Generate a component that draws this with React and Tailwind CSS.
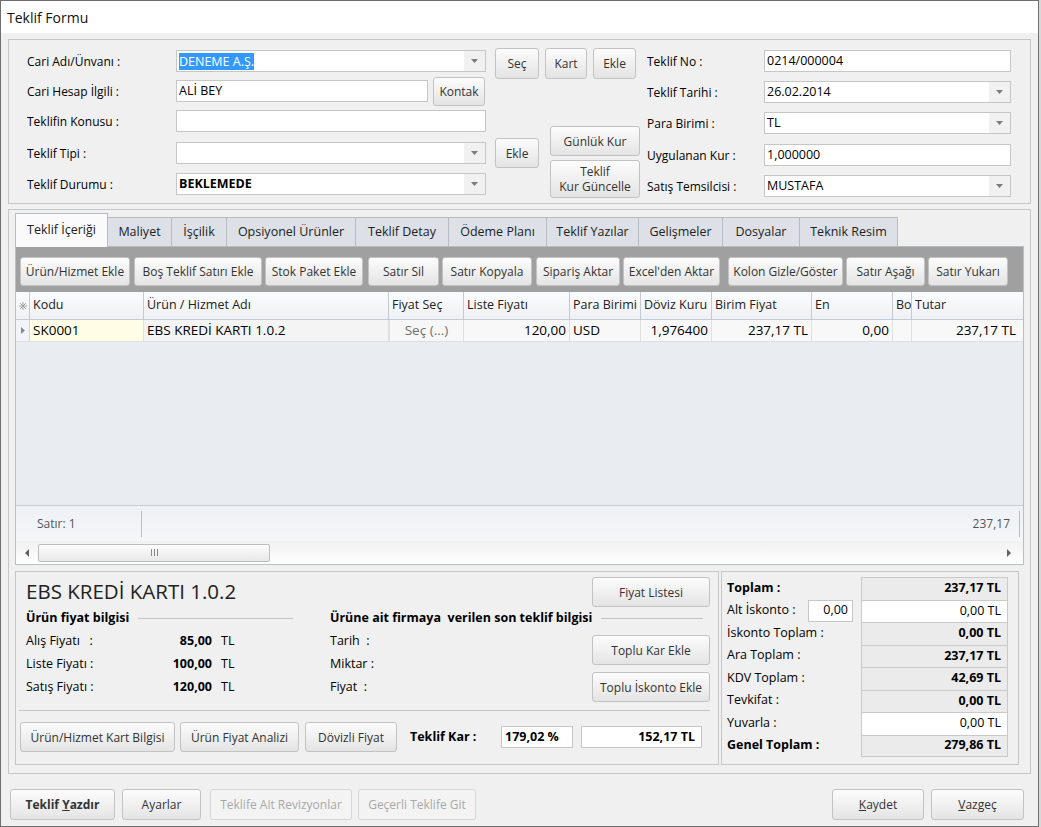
import React from "react";

function Caret() {
  return (
    <svg width="7" height="4" viewBox="0 0 7 4">
      <path d="M0 0h7L3.5 4z" fill="#7c7c7c" />
    </svg>
  );
}

function Btn({ children, className = "", disabled = false, bold = false }) {
  return (
    <button
      type="button"
      className={`flex shrink-0 items-center justify-center rounded-[3px] border text-[12px] leading-[15px] ${
        disabled
          ? "border-[#d6d6d6] bg-[#f3f3f3] text-[#a9a9a9]"
          : "border-[#c2c2c2] bg-linear-to-b from-[#fcfcfc] to-[#e4e4e4] text-[#333]"
      } ${bold ? "font-bold" : ""} ${className}`}
    >
      {children}
    </button>
  );
}

function Field({ className = "", value = "", combo = false, bold = false, selected = false }) {
  return (
    <div className={`flex h-[22px] shrink-0 items-stretch border border-[#c6c6c6] bg-white ${className}`}>
      <div
        className={`flex flex-1 items-center overflow-hidden whitespace-nowrap pl-[2px] text-[12.5px] text-black ${
          bold ? "font-bold" : ""
        }`}
      >
        {selected ? <span className="bg-[#3399ff] leading-[17px] text-white">{value}</span> : value}
      </div>
      {combo && (
        <div className="flex w-[21px] items-center justify-center bg-[#f1f1f1]">
          <Caret />
        </div>
      )}
    </div>
  );
}

function Label({ children, className = "" }) {
  return (
    <div className={`shrink-0 whitespace-nowrap pt-px text-[12px] leading-[22px] text-black ${className}`}>
      {children}
    </div>
  );
}

const tabs = [
  ["Teklif İçeriği", "w-[93px]"],
  ["Maliyet", "w-[64px]"],
  ["İşçilik", "w-[55px]"],
  ["Opsiyonel Ürünler", "w-[129px]"],
  ["Teklif Detay", "w-[93px]"],
  ["Ödeme Planı", "w-[98px]"],
  ["Teklif Yazılar", "w-[92px]"],
  ["Gelişmeler", "w-[84px]"],
  ["Dosyalar", "w-[77px]"],
  ["Teknik Resim", "w-[98px]"],
];

const toolbar = [
  ["Ürün/Hizmet Ekle", "ml-[4px] w-[110px]"],
  ["Boş Teklif Satırı Ekle", "ml-[4px] w-[128px]"],
  ["Stok Paket Ekle", "ml-[3px] w-[98px]"],
  ["Satır Sil", "ml-[5px] w-[71px]"],
  ["Satır Kopyala", "ml-[3px] w-[90px]"],
  ["Sipariş Aktar", "ml-[4px] w-[84px]"],
  ["Excel'den Aktar", "ml-[3px] w-[97px]"],
  ["Kolon Gizle/Göster", "ml-[8px] w-[115px]"],
  ["Satır Aşağı", "ml-[3px] w-[79px]"],
  ["Satır Yukarı", "ml-[3px] w-[80px]"],
];

const columns = [
  { title: "Kodu", w: "w-[114px]" },
  { title: "Ürün / Hizmet Adı", w: "w-[245px]" },
  { title: "Fiyat Seç", w: "w-[75px]" },
  { title: "Liste Fiyatı", w: "w-[106px]" },
  { title: "Para Birimi", w: "w-[71px]" },
  { title: "Döviz Kuru", w: "w-[71px]" },
  { title: "Birim Fiyat", w: "w-[100px]" },
  { title: "En", w: "w-[81px]" },
  { title: "Bo", w: "w-[19px]" },
  { title: "Tutar", w: "w-[107px]" },
];

const totals = [
  { label: "Toplam :", value: "237,17 TL", boldLabel: true },
  { label: "Alt İskonto :", value: "0,00 TL", white: true, input: "0,00" },
  { label: "İskonto Toplam :", value: "0,00 TL" },
  { label: "Ara Toplam :", value: "237,17 TL" },
  { label: "KDV Toplam :", value: "42,69 TL" },
  { label: "Tevkifat :", value: "0,00 TL" },
  { label: "Yuvarla :", value: "0,00 TL", white: true },
  { label: "Genel Toplam :", value: "279,86 TL", boldLabel: true },
];

function Star() {
  return (
    <svg width="8" height="8" viewBox="0 0 8 8" stroke="#a3a3a3" strokeWidth="1">
      <path d="M4 0v8M0 4h8M1.2 1.2l5.6 5.6M6.8 1.2L1.2 6.8" />
    </svg>
  );
}

function TopForm() {
  return (
    <div className="mx-[7px] mt-[6px] flex h-[165px] border border-[#c6c6c6] pl-[18px] pt-[10px]">
      <div className="flex w-[613px] flex-col">
        <div className="flex h-[22px] items-start">
          <Label className="w-[149px]">Cari Adı/Ünvanı :</Label>
          <Field className="w-[310px]" value="DENEME A.Ş." combo selected />
          <Btn className="-mt-[2px] ml-[9px] h-[31px] w-[44px]">Seç</Btn>
          <Btn className="-mt-[2px] ml-[6px] h-[31px] w-[42px]">Kart</Btn>
          <Btn className="-mt-[2px] ml-[6px] h-[31px] w-[43px]">Ekle</Btn>
        </div>
        <div className="mt-[8px] flex">
          <div className="flex w-[513px] flex-col">
            <div className="flex h-[22px] items-start">
              <Label className="w-[149px]">Cari Hesap İlgili :</Label>
              <Field className="w-[252px]" value="ALİ BEY" />
              <Btn className="-mt-[3px] ml-[5px] h-[29px] w-[52px]">Kontak</Btn>
            </div>
            <div className="mt-[8px] flex h-[22px] items-start">
              <Label className="w-[149px]">Teklifin Konusu :</Label>
              <Field className="w-[310px]" />
            </div>
            <div className="mt-[10px] flex h-[22px] items-start">
              <Label className="w-[149px]">Teklif Tipi :</Label>
              <Field className="w-[310px]" combo />
              <Btn className="-mt-[4px] ml-[9px] h-[30px] w-[44px]">Ekle</Btn>
            </div>
            <div className="mt-[9px] flex h-[22px] items-start">
              <Label className="w-[149px]">Teklif Durumu :</Label>
              <Field className="w-[310px]" value="BEKLEMEDE" combo bold />
            </div>
          </div>
          <div className="ml-[10px] flex w-[90px] flex-col">
            <Btn className="mt-[46px] h-[30px] w-[90px]">Günlük Kur</Btn>
            <Btn className="mt-[4px] h-[38px] w-[90px] flex-col">
              <span>Teklif</span>
              <span>Kur Güncelle</span>
            </Btn>
          </div>
        </div>
      </div>
      <div className="ml-[7px] flex flex-col">
        <div className="flex">
          <Label className="w-[117px]">Teklif No :</Label>
          <Field className="w-[247px]" value="0214/000004" />
        </div>
        <div className="mt-[8px] flex">
          <Label className="w-[117px]">Teklif Tarihi :</Label>
          <Field className="w-[247px]" value="26.02.2014" combo />
        </div>
        <div className="mt-[8px] flex">
          <Label className="w-[117px]">Para Birimi :</Label>
          <Field className="w-[247px]" value="TL" combo />
        </div>
        <div className="mt-[9px] flex">
          <Label className="w-[117px]">Uygulanan Kur :</Label>
          <Field className="w-[247px]" value="1,000000" />
        </div>
        <div className="mt-[8px] flex">
          <Label className="w-[117px]">Satış Temsilcisi :</Label>
          <Field className="w-[247px]" value="MUSTAFA" combo />
        </div>
      </div>
    </div>
  );
}

function Grid() {
  const row = [
    { v: "SK0001", cls: "bg-[#fffde6]" },
    { v: "EBS KREDİ KARTI 1.0.2", cls: "bg-[#f4f4f4]" },
    { v: "Seç (...)", cls: "justify-center text-[#6f6f6f] bg-[#f7f7f7] border-x border-[#d4d4d4]" },
    { v: "120,00", cls: "justify-end" },
    { v: "USD", cls: "" },
    { v: "1,976400", cls: "justify-end" },
    { v: "237,17 TL", cls: "justify-end" },
    { v: "0,00", cls: "justify-end" },
    { v: "", cls: "" },
    { v: "237,17 TL", cls: "justify-end" },
  ];
  return (
    <div className="flex h-[318px] flex-col border-x border-b border-[#b9bec6]">
      <div className="flex h-[45px] shrink-0 items-start bg-[#a0a0a0] pt-[10px]">
        {toolbar.map(([label, cls]) => (
          <Btn key={label} className={`h-[29px] text-[12.5px] ${cls}`}>
            {label}
          </Btn>
        ))}
      </div>
      <div className="flex h-[28px] shrink-0 border-b border-[#c5cad1] bg-linear-to-b from-[#fbfcfd] to-[#eef1f5] text-[12.5px] text-[#222]">
        <div className="flex w-[14px] items-center justify-center border-r border-[#c5cad1]">
          <Star />
        </div>
        {columns.map((c, i) => (
          <div
            key={c.title}
            className={`flex items-center overflow-hidden whitespace-nowrap pl-[3px] ${c.w} ${
              i < columns.length - 1 ? "border-r border-[#c5cad1]" : ""
            }`}
          >
            {c.title}
          </div>
        ))}
      </div>
      <div className="flex h-[22px] shrink-0 border-b border-[#dcdfe3] bg-[#f8f8f8] text-[13.5px] text-black">
        <div className="flex w-[14px] items-center justify-center border-r border-[#d0d4da] bg-[#f2f4f7]">
          <svg width="4" height="7" viewBox="0 0 4 7">
            <path d="M0 0l4 3.5L0 7z" fill="#8a8a8a" />
          </svg>
        </div>
        {row.map((c, i) => (
          <div
            key={i}
            className={`flex items-center overflow-hidden whitespace-nowrap px-[3px] ${columns[i].w} ${c.cls} ${
              i < row.length - 1 ? "border-r border-[#e0e0e0]" : ""
            }`}
          >
            {c.v}
          </div>
        ))}
      </div>
      <div className="flex-1 bg-[#e9ecf1]" />
      <div className="flex h-[36px] shrink-0 items-center border-t border-[#c9ced6] bg-linear-to-b from-[#eef1f5] to-[#f4f6f9] text-[12px] text-[#555]">
        <div className="flex h-[26px] w-[126px] items-center border-r border-[#b9bec6] pl-[21px]">Satır: 1</div>
        <div className="flex h-[26px] flex-1 items-center justify-end border-r border-[#b9bec6] pr-[9px]">237,17</div>
        <div className="w-[3px]" />
      </div>
      <div className="flex h-[23px] shrink-0 items-center bg-linear-to-b from-[#f1f1f1] to-white">
        <div className="flex w-[22px] justify-center">
          <svg width="4" height="8" viewBox="0 0 4 8">
            <path d="M4 0v8L0 4z" fill="#606060" />
          </svg>
        </div>
        <div className="flex h-[18px] w-[232px] items-center justify-center gap-[2px] rounded-[2px] border border-[#bdbdbd] bg-linear-to-b from-[#fdfdfd] to-[#e8e8e8]">
          <div className="h-[7px] w-px bg-[#888]" />
          <div className="h-[7px] w-px bg-[#888]" />
          <div className="h-[7px] w-px bg-[#888]" />
        </div>
        <div className="flex-1" />
        <div className="flex w-[16px] justify-start">
          <svg width="4" height="8" viewBox="0 0 4 8">
            <path d="M0 0v8L4 4z" fill="#606060" />
          </svg>
        </div>
      </div>
    </div>
  );
}

function ProductPanel() {
  const prices = [
    ["Alış Fiyatı   :", "85,00"],
    ["Liste Fiyatı :", "100,00"],
    ["Satış Fiyatı :", "120,00"],
  ];
  return (
    <div className="flex h-[194px] w-[704px] flex-col border border-[#c6c6c6] pl-[10px] pr-[8px] text-[12.5px] text-black">
      <div className="mt-[5px] flex items-start justify-between">
        <div className="mt-[1px] text-[20.5px] leading-[26px] text-[#222]">EBS KREDİ KARTI 1.0.2</div>
        <Btn className="h-[30px] w-[118px]">Fiyat Listesi</Btn>
      </div>
      <div className="mt-[2px] flex">
        <div className="flex w-[267px] flex-col">
          <div className="flex h-[18px] items-center">
            <span className="whitespace-nowrap font-bold">Ürün fiyat bilgisi</span>
            <div className="ml-[9px] h-px flex-1 bg-[#c3c3c3]" />
          </div>
          <div className="mt-[3px] flex flex-col">
            {prices.map(([l, v]) => (
              <div key={l} className="flex h-[23px] items-center">
                <div className="flex w-[186px] justify-between whitespace-pre">
                  <span>{l}</span>
                  <span className="font-bold">{v}</span>
                </div>
                <span className="ml-[9px]">TL</span>
              </div>
            ))}
          </div>
        </div>
        <div className="ml-[37px] flex flex-1 flex-col">
          <div className="flex h-[18px] items-center pr-[7px]">
            <span className="whitespace-pre font-bold">Ürüne ait firmaya  verilen son teklif bilgisi</span>
            <div className="ml-[9px] h-px flex-1 bg-[#c3c3c3]" />
          </div>
          <div className="flex items-start">
            <div className="mt-[3px] flex flex-col whitespace-pre">
              <div className="flex h-[23px] items-center">Tarih  :</div>
              <div className="flex h-[23px] items-center">Miktar :</div>
              <div className="flex h-[23px] items-center">Fiyat  :</div>
            </div>
            <div className="ml-auto mt-[8px] flex flex-col">
              <Btn className="h-[30px] w-[118px]">Toplu Kar Ekle</Btn>
              <Btn className="mt-[7px] h-[30px] w-[118px]">Toplu İskonto Ekle</Btn>
            </div>
          </div>
        </div>
      </div>
      <div className="-ml-[7px] mt-[8px] h-px bg-[#c3c3c3]" />
      <div className="mt-[11px] flex items-center">
        <Btn className="-ml-[6px] h-[30px] w-[155px]">Ürün/Hizmet Kart Bilgisi</Btn>
        <Btn className="ml-[5px] h-[30px] w-[119px]">Ürün Fiyat Analizi</Btn>
        <Btn className="ml-[6px] h-[30px] w-[92px]">Dövizli Fiyat</Btn>
        <span className="ml-[13px] w-[91px] whitespace-nowrap font-bold">Teklif Kar :</span>
        <div className="flex h-[22px] w-[72px] items-center border border-[#c6c6c6] bg-white pl-[3px] font-bold">
          179,02 %
        </div>
        <div className="ml-[8px] flex h-[22px] w-[121px] items-center justify-end border border-[#c6c6c6] bg-white pr-[6px] font-bold">
          152,17 TL
        </div>
      </div>
    </div>
  );
}

function TotalsPanel() {
  return (
    <div className="ml-[2px] flex h-[194px] w-[298px] flex-col border border-[#c6c6c6] pl-[5px] pr-[10px] pt-[5px] text-[12.5px] text-black">
      {totals.map((t, i) => (
        <div key={t.label} className="flex h-[22.5px] items-stretch">
          <div className={`flex flex-1 items-center whitespace-nowrap ${t.boldLabel ? "font-bold" : ""}`}>
            {t.label}
            {t.input && (
              <div className="ml-auto mr-[8px] flex h-[22px] w-[45px] items-center justify-end border border-[#c6c6c6] bg-white pr-[4px]">
                {t.input}
              </div>
            )}
          </div>
          <div
            className={`flex w-[147px] items-center justify-end border-x border-t border-[#c9c9c9] pr-[6px] ${
              i === totals.length - 1 ? "border-b" : ""
            } ${t.white ? "bg-white" : "bg-[#ebebeb] font-bold"}`}
          >
            {t.value}
          </div>
        </div>
      ))}
    </div>
  );
}

export default function App() {
  return (
    <div className="flex h-[827px] w-full bg-[#d8d8d8] font-['Open_Sans','Noto_Sans',sans-serif]">
      <div className="flex h-[827px] w-[1039px] shrink-0 flex-col border border-[#6f6f6f] bg-[#f0f0f0]">
        <div className="flex h-[32px] shrink-0 items-center bg-white pl-[6px] text-[14px] text-[#111]">Teklif Formu</div>
        <TopForm />
        <div className="mx-[7px] mt-[5px] flex h-[565px] flex-col border border-[#c6c6c6] px-[6px] pt-[3px]">
          <div className="flex h-[33px] shrink-0 items-end">
            {tabs.map(([label, w], i) => (
              <div
                key={label}
                className={`flex items-center justify-center whitespace-nowrap border-r border-t border-[#b6bbc3] text-[12.5px] text-[#222] ${w} ${
                  i === 0
                    ? "relative z-10 -mb-px h-[34px] border-l bg-[#fafafa]"
                    : "h-[29px] bg-[#dde1e7]"
                }`}
              >
                {label}
              </div>
            ))}
          </div>
          <div className="flex flex-col border-t border-[#b6bbc3]">
            <Grid />
            <div className="mt-[6px] flex">
              <ProductPanel />
              <TotalsPanel />
            </div>
          </div>
        </div>
        <div className="mt-[15px] flex pl-[9px] pr-[14px]">
          <Btn bold className="h-[31px] w-[105px] text-[12.5px]">
            Teklif&nbsp;<span className="underline">Y</span>azdır
          </Btn>
          <Btn className="ml-[7px] h-[31px] w-[79px]">Ayarlar</Btn>
          <Btn disabled className="ml-[9px] h-[31px] w-[142px]">Teklife Ait Revizyonlar</Btn>
          <Btn disabled className="ml-[6px] h-[31px] w-[118px]">Geçerli Teklife Git</Btn>
          <div className="flex-1" />
          <Btn className="h-[31px] w-[92px]">
            <span className="underline">K</span>aydet
          </Btn>
          <Btn className="ml-[7px] h-[31px] w-[93px]">
            <span className="underline">V</span>azgeç
          </Btn>
        </div>
      </div>
    </div>
  );
}
